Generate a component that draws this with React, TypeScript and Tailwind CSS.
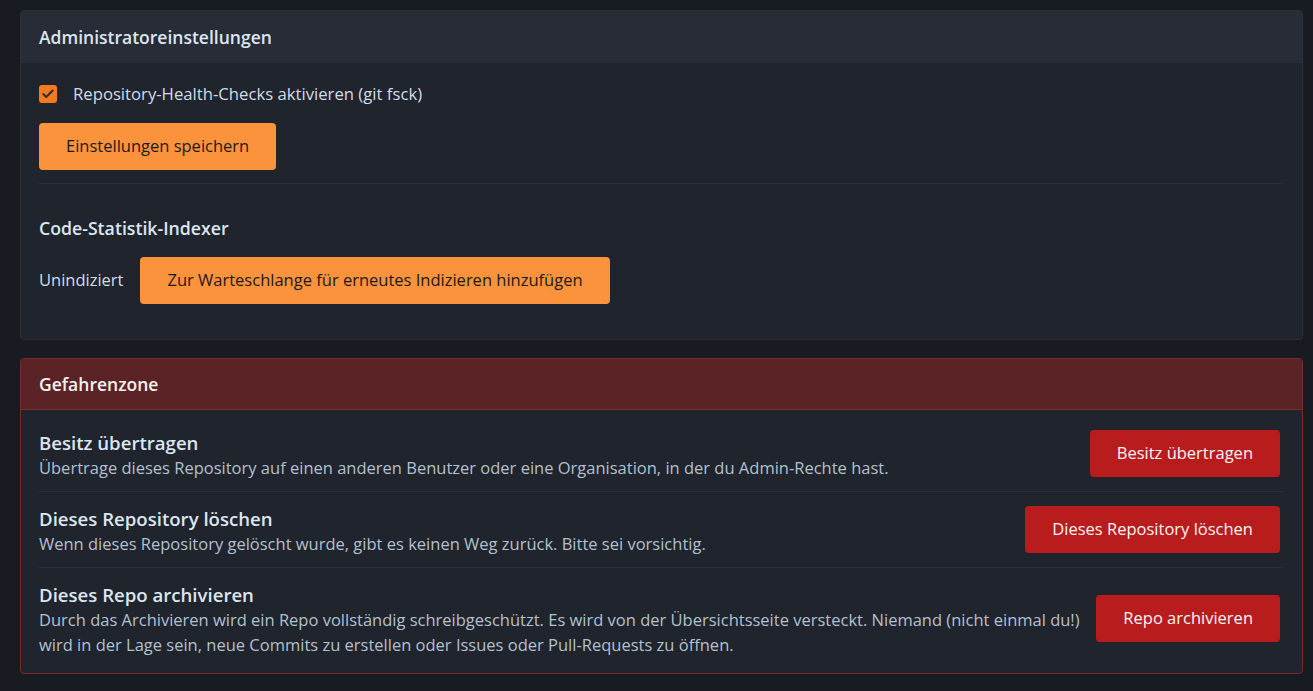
import { Check } from "lucide-react";

const font = { fontFamily: '"Open Sans", "Liberation Sans", sans-serif' };

function DangerRow({
  title,
  text,
  action,
  last,
}: {
  title: string;
  text: string;
  action: string;
  last?: boolean;
}) {
  return (
    <div
      className={
        "flex items-center justify-between gap-[12px] pt-[14px] pb-[11px] " +
        (last ? "" : "border-b border-[#2a2f39]")
      }
    >
      <div className="flex-1">
        <div className="text-[18.6px] leading-[25px] font-semibold text-[#dde6f2]">{title}</div>
        <div className="text-[16.5px] leading-[25px] text-[#b4c0cf]">{text}</div>
      </div>
      <button className="shrink-0 mr-[4px] mb-[3px] h-[47px] px-[27px] rounded-[4px] bg-[#b91c1c] text-[16.5px] text-[#f5f5f5]">
        {action}
      </button>
    </div>
  );
}

export default function App() {
  return (
    <div className="min-h-[691px] bg-[#181c22] pl-[20px] pr-[10px] pt-[10px] pb-[17px]" style={font}>
      {/* admin settings */}
      <div className="rounded-[4px] border border-[#2a2f39] bg-[#1f242d]">
        <div className="h-[52px] flex items-center px-[18px] bg-[#272c37] rounded-t-[4px]">
          <h2 className="text-[17.5px] font-semibold text-[#dde6f2]">Administratoreinstellungen</h2>
        </div>
        <div className="px-[18px] pt-[19px] pb-[35px]">
          <label className="flex items-center gap-[16px] text-[16.7px] leading-[24px] text-[#d3dce8]">
            <span className="w-[18px] h-[18px] rounded-[3px] bg-[#f47a20] flex items-center justify-center">
              <Check size={14} strokeWidth={3.5} className="text-[#2e2e2e]" />
            </span>
            Repository-Health-Checks aktivieren (git fsck)
          </label>
          <button className="mt-[17px] h-[47px] px-[27px] rounded-[4px] bg-[#fb923c] text-[16.5px] text-[#1b1b1b]">
            Einstellungen speichern
          </button>
          <div className="mt-[13px] border-t border-[#2a2f39]" />
          <h3 className="mt-[31px] text-[17.7px] leading-[26px] font-semibold text-[#dde6f2]">
            Code-Statistik-Indexer
          </h3>
          <div className="mt-[16px] flex items-center gap-[17px]">
            <span className="text-[16.5px] text-[#d3dce8]">Unindiziert</span>
            <button className="h-[47px] px-[27px] rounded-[4px] bg-[#fb923c] text-[16.5px] text-[#1b1b1b]">
              Zur Warteschlange für erneutes Indizieren hinzufügen
            </button>
          </div>
        </div>
      </div>

      {/* danger zone */}
      <div className="mt-[18px] rounded-[4px] border border-[#7a2b2b] bg-[#1f242d]">
        <div className="h-[51px] flex items-center px-[18px] bg-[#5c2326] border-b border-[#7a2b2b] rounded-t-[4px]">
          <h2 className="text-[17.5px] font-semibold text-[#f2f2f2]">Gefahrenzone</h2>
        </div>
        <div className="px-[18px] pt-[6px] pb-[5px]">
          <DangerRow
            title="Besitz übertragen"
            text="Übertrage dieses Repository auf einen anderen Benutzer oder eine Organisation, in der du Admin-Rechte hast."
            action="Besitz übertragen"
          />
          <DangerRow
            title="Dieses Repository löschen"
            text="Wenn dieses Repository gelöscht wurde, gibt es keinen Weg zurück. Bitte sei vorsichtig."
            action="Dieses Repository löschen"
          />
          <DangerRow
            title="Dieses Repo archivieren"
            text="Durch das Archivieren wird ein Repo vollständig schreibgeschützt. Es wird von der Übersichtsseite versteckt. Niemand (nicht einmal du!) wird in der Lage sein, neue Commits zu erstellen oder Issues oder Pull-Requests zu öffnen."
            action="Repo archivieren"
            last
          />
        </div>
      </div>
    </div>
  );
}
